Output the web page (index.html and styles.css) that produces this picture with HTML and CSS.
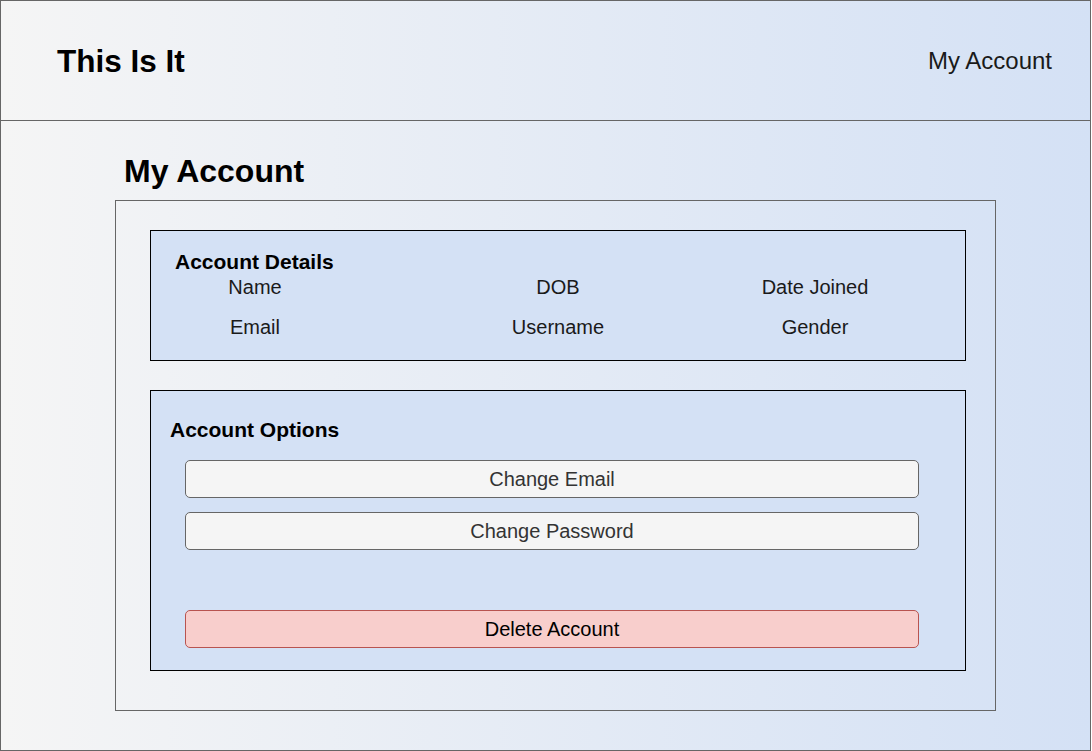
FILE: index.html
```html
<!DOCTYPE html>
<html lang="en">
<head>
<meta charset="utf-8">
<title>This Is It - My Account</title>
<link rel="stylesheet" href="styles.css">
</head>
<body>
<div class="frame">
  <header class="topbar">
    <div class="brand">This Is It</div>
    <nav class="nav-link">My Account</nav>
  </header>
  <main class="main">
    <h1 class="page-title">My Account</h1>
    <section class="account-box">
      <div class="panel details">
        <h2 class="panel-title">Account Details</h2>
        <div class="details-grid">
          <span>Name</span><span>DOB</span><span>Date Joined</span>
          <span>Email</span><span>Username</span><span>Gender</span>
        </div>
      </div>
      <div class="panel options">
        <h2 class="panel-title options-title">Account Options</h2>
        <div class="buttons">
          <button class="btn">Change Email</button>
          <button class="btn">Change Password</button>
          <button class="btn btn-danger">Delete Account</button>
        </div>
      </div>
    </section>
  </main>
</div>
</body>
</html>
```
FILE: styles.css
```css
* { box-sizing: border-box; }
html, body { margin: 0; padding: 0; }
body {
  font-family: "Liberation Sans", Arial, Helvetica, sans-serif;
  color: #1a1a1a;
  background: #ffffff;
}
.frame {
  width: 1091px;
  height: 751px;
  border: 1px solid #666666;
  background: linear-gradient(to right, #f5f5f5 0%, #d4e1f5 100%);
  display: flex;
  flex-direction: column;
}
.topbar {
  height: 120px;
  border-bottom: 1px solid #666666;
  display: flex;
  align-items: center;
  justify-content: space-between;
  padding: 0 38px 0 56px;
}
.brand {
  font-size: 31.5px;
  font-weight: 700;
  color: #000000;
  line-height: 36px;
}
.nav-link {
  font-size: 24px;
  line-height: 28px;
  color: #1a1a1a;
}
.main {
  padding: 32px 0 0 114px;
}
.page-title {
  margin: 0 0 11px 9px;
  font-size: 32px;
  line-height: 36px;
  font-weight: 700;
  color: #000000;
}
.account-box {
  width: 881px;
  height: 511px;
  border: 1px solid #666666;
  padding: 29px 29px 0 34px;
  display: flex;
  flex-direction: column;
  gap: 29px;
}
.panel {
  width: 816px;
  border: 1px solid #000000;
  background: #d4e1f5;
}
.details {
  height: 131px;
  padding: 19px 0 0 0;
}
.options {
  height: 281px;
  padding: 27px 0 0 0;
}
.panel-title {
  margin: 0;
  font-size: 21px;
  line-height: 23px;
  font-weight: 700;
  color: #000000;
  padding-left: 24px;
}
.options-title {
  padding-left: 19px;
}
.details-grid {
  display: grid;
  grid-template-columns: 208px 398px 116px;
  row-gap: 17px;
  justify-items: center;
  margin-top: 3px;
  font-size: 20px;
  line-height: 23px;
  color: #1a1a1a;
}
.details-grid span { white-space: nowrap; }
.buttons {
  display: flex;
  flex-direction: column;
  gap: 14px;
  margin: 19px 0 0 34px;
}
.btn {
  width: 734px;
  height: 38px;
  border: 1px solid #666666;
  border-radius: 5px;
  background: #f5f5f5;
  color: #333333;
  font-family: "Liberation Sans", Arial, Helvetica, sans-serif;
  font-size: 20px;
  line-height: 23px;
  padding: 0;
  text-align: center;
  cursor: pointer;
}
.btn-danger {
  margin-top: 46px;
  background: #f8cecc;
  border-color: #b85450;
  color: #000000;
}
```
